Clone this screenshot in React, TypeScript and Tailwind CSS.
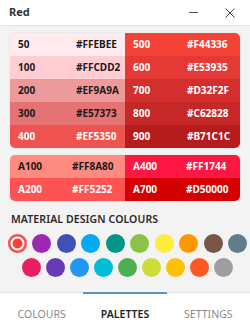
import React from "react";

const mainLeft = [
  { n: "50", h: "#FFEBEE", dark: true },
  { n: "100", h: "#FFCDD2", dark: true },
  { n: "200", h: "#EF9A9A", dark: true },
  { n: "300", h: "#E57373", dark: true },
  { n: "400", h: "#EF5350", dark: false },
];
const mainRight = [
  { n: "500", h: "#F44336" },
  { n: "600", h: "#E53935" },
  { n: "700", h: "#D32F2F" },
  { n: "800", h: "#C62828" },
  { n: "900", h: "#B71C1C" },
];
const accLeft = [
  { n: "A100", h: "#FF8A80", dark: true },
  { n: "A200", h: "#FF5252", dark: false },
];
const accRight = [
  { n: "A400", h: "#FF1744" },
  { n: "A700", h: "#D50000" },
];

const row1 = ["#F44336", "#9C27B0", "#3F51B5", "#03A9F4", "#009688", "#8BC34A", "#FFEB3B", "#FF9800", "#795548", "#607D8B"];
const row2 = ["#E91E63", "#673AB7", "#2196F3", "#00BCD4", "#4CAF50", "#CDDC39", "#FFC107", "#FF5722", "#9E9E9E"];

function Cell({ n, h, dark, labelW }: { n: string; h: string; dark?: boolean; labelW: string }) {
  return (
    <div
      className={`flex items-center h-[23px] pl-[8px] text-[10px] font-bold ${dark ? "text-[#1a1a1a]" : "text-white"}`}
      style={{ backgroundColor: h }}
    >
      <span className={labelW}>{n}</span>
      <span>{h}</span>
    </div>
  );
}

export default function App() {
  return (
    <div
      className="w-[250px] h-[335px] bg-[#f3f3f3] flex flex-col overflow-hidden"
      style={{ fontFamily: '"Segoe UI", "Noto Sans", sans-serif' }}
    >
      <div className="h-[26px] bg-white border-b border-[#e3e3e3] flex items-center pl-[9px] shrink-0">
        <span className="text-[11px] font-bold text-[#333]">Red</span>
        <div className="ml-auto flex items-center">
          <div className="w-[9px] h-[1px] bg-[#555] mr-[27px]" />
          <svg width="10" height="10" viewBox="0 0 10 10" className="mr-[15px]">
            <path d="M0.5 0.5 L9.5 9.5 M9.5 0.5 L0.5 9.5" stroke="#444" strokeWidth="1" />
          </svg>
        </div>
      </div>

      <div className="flex-1 px-[10px] pt-[7px] flex flex-col">
        <div className="grid grid-cols-2 rounded-[5px] overflow-hidden shadow-[0_0_2px_rgba(0,0,0,0.12)]">
          <div className="flex flex-col">
            {mainLeft.map((c) => (
              <Cell key={c.n} n={c.n} h={c.h} dark={c.dark} labelW="w-[58px]" />
            ))}
          </div>
          <div className="flex flex-col">
            {mainRight.map((c) => (
              <Cell key={c.n} n={c.n} h={c.h} labelW="w-[54px]" />
            ))}
          </div>
        </div>

        <div className="mt-[7px] grid grid-cols-2 rounded-[5px] overflow-hidden shadow-[0_0_2px_rgba(0,0,0,0.12)]">
          <div className="flex flex-col">
            {accLeft.map((c) => (
              <Cell key={c.n} n={c.n} h={c.h} dark={c.dark} labelW="w-[54px]" />
            ))}
          </div>
          <div className="flex flex-col">
            {accRight.map((c) => (
              <Cell key={c.n} n={c.n} h={c.h} labelW="w-[53px]" />
            ))}
          </div>
        </div>

        <div className="mt-[11px] pl-[1px] text-[10.5px] font-semibold text-[#2a2a2a] tracking-[0.1px]">
          MATERIAL DESIGN COLOURS
        </div>
      </div>

      <div className="shrink-0 flex flex-col items-center gap-y-[5px] pb-[15px] pl-[5px]">
        <div className="flex gap-x-[5.5px] justify-center w-[250px]">
          {row1.map((c, i) => (
            <div
              key={c}
              className={`w-[19px] h-[19px] rounded-full shrink-0 ${i === 0 ? "shadow-[inset_0_0_0_2.5px_#ef5350,inset_0_0_0_4.5px_#ffffff]" : ""}`}
              style={{ backgroundColor: c }}
            />
          ))}
        </div>
        <div className="flex gap-x-[5px] justify-center w-[250px]">
          {row2.map((c) => (
            <div key={c} className="w-[19px] h-[19px] rounded-full shrink-0" style={{ backgroundColor: c }} />
          ))}
        </div>
      </div>

      <div className="shrink-0 h-[43px] bg-white border-t border-[#e2e2e2] relative">
        <div className="absolute top-[-1px] left-[83px] w-[84px] h-[2px] bg-[#5b93bf]" />
        <div className="grid grid-cols-3 h-full items-center text-[10.5px] text-center pt-[1px]">
          <span className="text-[#8a8a8a]">COLOURS</span>
          <span className="text-[#222] font-semibold">PALETTES</span>
          <span className="text-[#8a8a8a]">SETTINGS</span>
        </div>
      </div>
    </div>
  );
}
